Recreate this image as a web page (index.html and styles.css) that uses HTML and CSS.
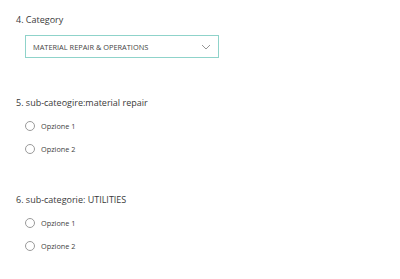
FILE: index.html
```html
<!DOCTYPE html>
<html lang="it">
<head>
    <meta charset="UTF-8">
    <meta name="viewport" content="width=device-width, initial-scale=1.0">
    <title>Modulo - Categoria</title>
    <link rel="stylesheet" href="styles.css">
</head>
<body>
    <div class="form-container">
        <div class="question">
            <div class="question-title">4. Category</div>
            <div class="dropdown">
                <span class="dropdown-value">MATERIAL REPAIR &amp; OPERATIONS</span>
                <svg class="dropdown-chevron" width="10" height="6" viewBox="0 0 10 6">
                    <path d="M1 1 L5 5 L9 1" fill="none" stroke="#8a8a8a" stroke-width="0.9"/>
                </svg>
            </div>
        </div>

        <div class="question">
            <div class="question-title">5. sub-cateogire:material repair</div>
            <div class="options">
                <label class="option"><span class="radio"></span>Opzione 1</label>
                <label class="option"><span class="radio"></span>Opzione 2</label>
            </div>
        </div>

        <div class="question">
            <div class="question-title">6. sub-categorie: UTILITIES</div>
            <div class="options">
                <label class="option"><span class="radio"></span>Opzione 1</label>
                <label class="option"><span class="radio"></span>Opzione 2</label>
            </div>
        </div>
    </div>
</body>
</html>
```

FILE: styles.css
```css
body {
    font-family: 'Open Sans', 'Noto Sans', sans-serif;
    background: #fff;
    margin: 0;
    padding: 0;
    color: #333;
}

.form-container {
    padding: 13px 0 0 16px;
}

.question {
    margin-bottom: 35px;
}

.question:first-child {
    margin-bottom: 38px;
}

.question-title {
    font-size: 9px;
    line-height: 14px;
    color: #3a3a3a;
}

.dropdown {
    margin: 8px 0 0 9px;
    width: 194px;
    height: 23px;
    box-sizing: border-box;
    border: 1px solid #8fd3ca;
    display: flex;
    align-items: center;
    justify-content: space-between;
    padding: 0 7px 0 7px;
}

.dropdown-value {
    font-size: 7.4px;
    color: #444;
}

.options {
    margin: 7px 0 0 9px;
    display: flex;
    flex-direction: column;
    gap: 5px;
}

.option {
    display: flex;
    align-items: center;
    height: 18px;
    font-size: 7.3px;
    color: #3f3f3f;
}

.radio {
    width: 10px;
    height: 10px;
    box-sizing: border-box;
    border: 1px solid #9a9a9a;
    border-radius: 50%;
    margin-right: 6px;
}
```
